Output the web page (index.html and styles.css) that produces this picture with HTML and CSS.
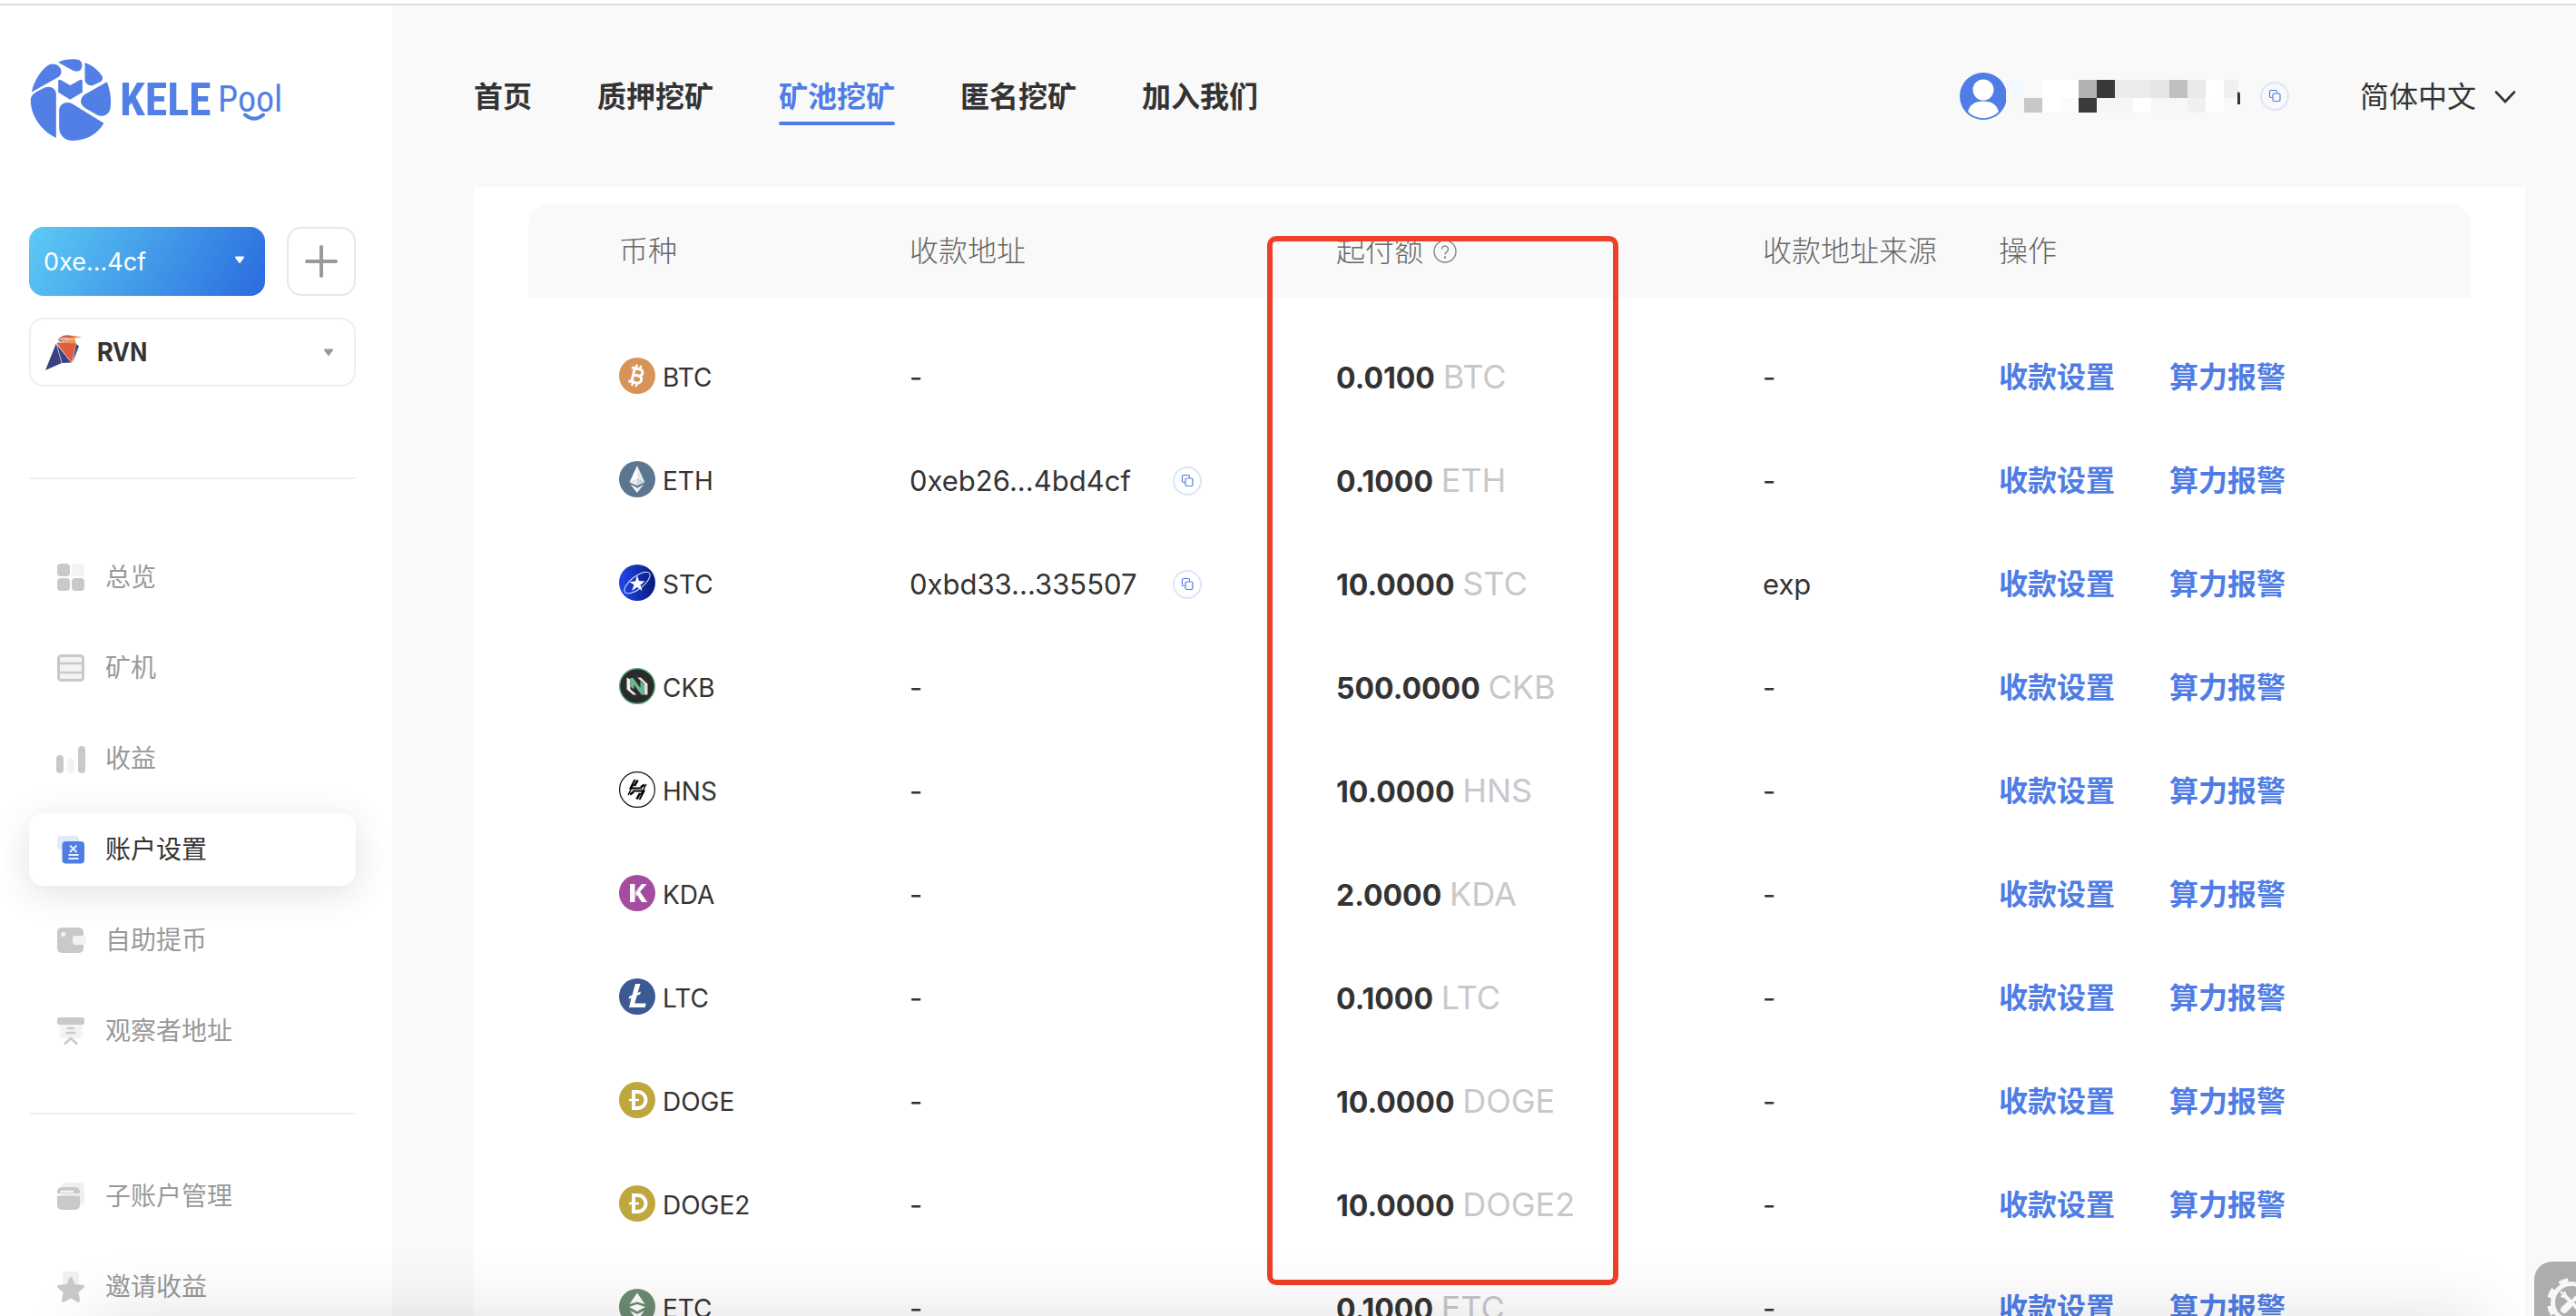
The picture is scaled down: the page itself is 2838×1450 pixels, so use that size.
FILE: index.html
```html
<!DOCTYPE html>
<html lang="zh-CN">
<head>
<meta charset="utf-8">
<title>KELE POOL - 账户设置</title>
<link rel="stylesheet" href="styles.css">
</head>
<body>
<svg class="sprite" aria-hidden="true">
  <defs>
    <linearGradient id="stc-fill" x1="0" x2="1" y1="0" y2="0"><stop offset="0.1" stop-color="#1d43e2"/><stop offset="1" stop-color="#071a7a"/></linearGradient>
    <linearGradient id="kda-fill" x1="0" x2="1" y1="1" y2="0"><stop offset="0" stop-color="#fff" stop-opacity="0.35"/><stop offset="0.5" stop-color="#fff"/></linearGradient>
  </defs>
  <symbol id="copy" viewBox="0 0 32 32">
    <circle cx="16" cy="16" r="15" fill="none" stroke="#dbe4fa" stroke-width="2"/>
    <path d="M13.500 17.500H12a1.500 1.500 0 0 1-1.500-1.500v-5A1.500 1.500 0 0 1 12 9.500h5a1.500 1.500 0 0 1 1.500 1.500v1.500" fill="none" stroke="#4f7de5" stroke-width="1.200"/>
    <rect x="14" y="13" width="8" height="8.500" rx="1.500" fill="none" stroke="#4f7de5" stroke-width="1.200"/>
  </symbol>
  <symbol id="btc" viewBox="0 0 40 40">
    <circle cx="20" cy="20" r="20" fill="#d79358"/>
    <g transform="rotate(13 20 20)" fill="none" stroke="#fff" stroke-width="3">
      <path d="M12 12.500h9.500a3.600 3.600 0 0 1 0 7.200h-6M21.500 19.700a4 4 0 0 1 0 8H12M15.500 12.500v15"/>
      <path d="M17 8v4M21.500 8v4M17 28v4M21.500 28v4" stroke-width="2.400"/>
    </g>
  </symbol>
  <symbol id="eth" viewBox="0 0 40 40">
    <circle cx="20" cy="20" r="20" fill="#5b7790"/>
    <path d="M20 5l-8.500 18.500L20 20z" fill="#fff"/><path d="M20 5l8.500 18.500L20 20z" fill="#e4e9ee"/>
    <path d="M11.500 23.500L20 20v7z" fill="#e9edf1"/><path d="M28.500 23.500L20 20v7z" fill="#cfd7df"/>
    <path d="M12.500 25.500l7.500 4.200V35z" fill="#fff"/><path d="M27.500 25.500L20 29.700V35z" fill="#e4e9ee"/>
  </symbol>
  <symbol id="stc" viewBox="0 0 40 40">
    <circle cx="20" cy="20" r="20" fill="url(#stc-fill)"/>
    <ellipse cx="20" cy="20" rx="17" ry="7" transform="rotate(-38 20 20)" fill="none" stroke="#dfe5ff" stroke-width="1"/>
    <path d="M20 12l2 6 6.500.500-5 4L25.500 29 20 25l-6 4 2.500-6.500-5-3.500 6.500-.500z" fill="#fff"/>
  </symbol>
  <symbol id="ckb" viewBox="0 0 40 40">
    <circle cx="20" cy="20" r="19.300" fill="#2b2b2b" stroke="#5aa57c" stroke-width="1.400"/>
    <path d="M8.500 10.500l4 2v11l7 6h-4l-7-6z" fill="#eee"/>
    <path d="M20 10.500h4l7.500 7V29.500h-4V17z" fill="#e2e2e2"/>
    <path d="M12.500 11h3l8 11v-8l4 4v11.500h-3l-8-11v5l-4-3z" fill="#6bb88d"/>
  </symbol>
  <symbol id="hns" viewBox="0 0 40 40">
    <circle cx="20" cy="20" r="19.400" fill="#fff" stroke="#111" stroke-width="1.200"/>
    <g fill="none" stroke="#000">
      <path d="M17.500 9l-5 9.500H25" stroke-width="2"/><path d="M22.500 31l5-9.500H15" stroke-width="2"/>
      <path d="M20.500 9.500L17 16M28 14.500L24 17.500M12 25.500l4-3M19.500 30.500l3.500-6.500" stroke-width="2.600"/>
      <path d="M30 14l-6.500 12M10 26l6-12" stroke-width="1.400"/>
    </g>
  </symbol>
  <symbol id="kda" viewBox="0 0 40 40">
    <circle cx="20" cy="20" r="20" fill="#a54ba0"/>
    <path d="M12 10h5.500v20H12z" fill="#fff"/><path d="M17.500 19.500L25 10h5.500L17.500 25z" fill="url(#kda-fill)"/><path d="M18.500 20l4-2.500L31 30h-6z" fill="#fff"/>
  </symbol>
  <symbol id="ltc" viewBox="0 0 40 40">
    <circle cx="20" cy="20" r="20" fill="#3b5a93"/>
    <path d="M18 6h5.500l-3 10 3.500-1.500-.800 3-3.500 1.500-2.500 8.500h12.500l-1 4.500H11l2.500-10.500-3 1.200.800-3 3.200-1.300z" fill="#fff"/>
  </symbol>
  <symbol id="doge" viewBox="0 0 40 40">
    <circle cx="20" cy="20" r="20" fill="#bea73f"/>
    <path d="M16 11h4.500a8.900 8.900 0 0 1 0 18H16z" fill="none" stroke="#fff" stroke-width="4"/>
    <path d="M11 20h11" stroke="#fff" stroke-width="2.400"/>
  </symbol>
  <symbol id="etc" viewBox="0 0 40 40">
    <circle cx="20" cy="20" r="20" fill="#6d8b73"/>
    <path d="M20 4.500l8.500 12.500L20 14.500 11.500 17zM11 20l9-3 9 3-9 5zM12 24l8 4 8-4-8 11z" fill="#fff"/>
  </symbol>
</svg>

<div class="shell">
  <aside class="sidebar">
    <a class="logo" href="#" aria-label="KELE POOL">
      <svg class="logo-mark" viewBox="102 195 264 267" fill="#517fe5" aria-hidden="true">
        <path d="M106 303C113 268 138 226 165 213C186 206 203 220 203 238C202 247 197 252 190 256Z"/>
        <path d="M193 206C215 194 250 194 262 199C275 207 272 225 265 231C258 237 247 236 240 232Z"/>
        <path d="M280 207C305 216 327 235 337 252C340 260 336 267 330 270L307 281C295 285 280 276 280 262Z"/>
        <path d="M352 270C362 295 368 330 363 358C357 378 340 385 322 379L283 357C262 345 262 325 280 311Z"/>
        <path d="M342 405C322 440 285 462 240 462C215 462 196 445 196 420V362C197 340 222 330 242 343Z"/>
        <path d="M186 453C135 430 100 375 103 325C105 315 112 308 120 303L150 288C168 281 186 293 186 310Z"/>
        <path d="M193 268Q193 260 201 263L232 281L264 263Q272 260 272 268V304L232 328L193 304Z"/>
      </svg>
      <span class="logo-kele">KELE</span>
      <span class="logo-pool">Pool
        <svg class="logo-smile" viewBox="0 0 24 10" aria-hidden="true"><path d="M2 2.500Q12 11 22 2.500" fill="none" stroke="#517fe5" stroke-width="4" stroke-linecap="round"/></svg>
      </span>
    </a>

    <div class="account-row">
      <div class="picker picker-account">
        <select aria-label="账户"><option>0xe...4cf</option></select>
        <svg class="caret" viewBox="0 0 12 10" aria-hidden="true"><path d="M2 1.500h8L6 7z" fill="currentColor" stroke="currentColor" stroke-width="2" stroke-linejoin="round"/></svg>
      </div>
      <button class="add" type="button" aria-label="添加账户"><svg viewBox="0 0 36 36" aria-hidden="true"><path d="M18 2v32M2 18h32" stroke="#999" stroke-width="4" stroke-linecap="round"/></svg></button>
    </div>
    <div class="picker picker-coin">
      <svg class="rvn" viewBox="0 0 40 40" aria-hidden="true">
        <path d="M12 10l6 22L0 40z" fill="#3a4283"/><path d="M12 11l17 20.500-11 .500z" fill="#3a4283"/>
        <path d="M12 10h22l-5 22z" fill="#df5c42"/><path d="M34 11l3 2.500L30 31z" fill="#3a4283"/>
        <path d="M12 9.500L32 5l2 5.500z" fill="#e99a4b"/><path d="M14 7l16-2.500-14 3.500z" fill="#3a4283"/>
        <path d="M13 7q6-8 17-5l10 1.500-12 1.500q-8-2-15 2" fill="#df5c42"/><path d="M28 3h12l-10 2z" fill="#e99a4b"/>
        <path d="M12 10l6 22M12 10l17 22" stroke="#fff" stroke-width=".6"/>
      </svg>
      <select aria-label="币种"><option>RVN</option></select>
      <svg class="caret" viewBox="0 0 12 10" aria-hidden="true"><path d="M2 1.500h8L6 7z" fill="currentColor" stroke="currentColor" stroke-width="2" stroke-linejoin="round"/></svg>
    </div>

    <nav class="menu" aria-label="账户菜单">
      <ul class="menu-group menu-main">
        <li><a href="#"><svg viewBox="0 0 32 32"><g fill="#c9c9c9"><rect x="1" y="1" width="14" height="14" rx="4"/><rect x="1" y="17" width="14" height="14" rx="4"/><rect x="17" y="17" width="14" height="14" rx="4"/></g><rect x="17" y="1" width="14" height="14" rx="4" fill="#f3f3f3"/></svg>总览</a></li>
        <li><a href="#"><svg viewBox="0 0 32 32"><rect x="2.500" y="2.500" width="27" height="27" rx="3" fill="#f3f3f3" stroke="#c9c9c9" stroke-width="3"/><path d="M2 11h28M2 21h28" stroke="#c9c9c9" stroke-width="2.500"/></svg>矿机</a></li>
        <li><a href="#"><svg viewBox="0 0 32 32"><rect x="0" y="12" width="8" height="20" rx="4" fill="#c9c9c9"/><rect x="12" y="16" width="8" height="16" rx="4" fill="#f3f3f3"/><rect x="24" y="2" width="8" height="30" rx="4" fill="#c9c9c9"/></svg>收益</a></li>
        <li><a class="active" href="#" aria-current="page"><svg viewBox="0 0 32 32"><rect x="1" y="1" width="24" height="15" rx="4" fill="#dfebfc"/><rect x="6.500" y="7" width="24.500" height="24.500" rx="4" fill="#4f7de5"/><path d="M15 11.500l7.500 7.500M22.500 11.500L15 19M13.500 22h11M13.500 26h11" stroke="#e8effd" stroke-width="2"/></svg>账户设置</a></li>
        <li><a href="#"><svg viewBox="0 0 32 32"><rect x="1" y="2" width="29" height="28" rx="5" fill="#c9c9c9"/><circle cx="8" cy="9.500" r="2.500" fill="#f3f3f3"/><rect x="18" y="11" width="15" height="10" rx="3" fill="#f3f3f3"/></svg>自助提币</a></li>
        <li><a href="#"><svg viewBox="0 0 32 32"><path d="M3.500 8h25v12a4 4 0 0 1-4 4h-17a4 4 0 0 1-4-4z" fill="#f3f3f3"/><rect x="1" y="1" width="30" height="8" rx="2" fill="#c9c9c9"/><path d="M13 13h6M11.500 18h9M9.500 30l6.500-6 6.500 6" fill="none" stroke="#c9c9c9" stroke-width="2.400" stroke-linecap="round"/></svg>观察者地址</a></li>
      </ul>
      <ul class="menu-group">
        <li><a href="#"><svg viewBox="0 0 32 32"><rect x="6" y="1" width="25" height="25" rx="5" fill="#f0f0f0"/><path d="M1 13V11a5 5 0 0 1 5-5h15a5 5 0 0 1 5 5v2zM1 15.500h25V26a5 5 0 0 1-5 5H6a5 5 0 0 1-5-5z" fill="#c9c9c9"/><path d="M5.500 11h8.500M16 11h2" stroke="#f6f6f6" stroke-width="2.400" stroke-linecap="round"/></svg>子账户管理</a></li>
        <li><a href="#"><svg viewBox="0 0 32 32"><rect x="7" y="-1" width="18" height="18" rx="2" fill="#f0f0f0"/><path d="M16 5q1.200 0 1.800 1.500L20.500 13l9 1q2.500.800.800 2.800L24.500 22l1.500 9q-.300 2.600-2.800 1.500L16 28.500 8.800 32.500Q6.300 33.600 6 31l1.500-9L1.700 16.800Q0 14.800 2.500 14l9-1 2.700-6.500Q14.800 5 16 5z" fill="#c9c9c9"/></svg>邀请收益</a></li>
      </ul>
    </nav>
  </aside>

  <main class="main">
    <header class="topbar">
      <nav class="topnav" aria-label="主导航">
        <a href="#">首页</a>
        <a href="#">质押挖矿</a>
        <a class="current" href="#" aria-current="page">矿池挖矿</a>
        <a href="#">匿名挖矿</a>
        <a href="#">加入我们</a>
      </nav>
      <div class="user">
        <svg class="avatar" viewBox="0 0 52 52" aria-hidden="true"><circle cx="26" cy="26" r="26" fill="#4f7de5"/><circle cx="26" cy="19" r="11.500" fill="#fff"/><path d="M9 43q3-11.500 17-11.500T43 43q-7 7.300-17 7.300T9 43z" fill="#fff"/></svg>
        <svg class="masked" viewBox="0 0 260 52" aria-hidden="true">
          <clipPath id="mask"><rect x="-1" y="-8" width="257" height="52" rx="20"/></clipPath>
          <g clip-path="url(#mask)">
            <path d="M0 8h20v20H0z" fill="#f2f8fe"/><path d="M40 8h40v20H40z" fill="#fff"/><path d="M80 8h20v20H80z" fill="#b1b1b1"/><path d="M100 8h20v20h-20z" fill="#393939"/><path d="M120 8h60v20h-60z" fill="#ebebeb"/><path d="M160 8h20v20h-20z" fill="#e5e5e5"/><path d="M180 8h20v20h-20z" fill="#c0c0c0"/><path d="M200 8h20v20h-20z" fill="#eaeaea"/><path d="M220 8h20v20h-20z" fill="#fff"/><path d="M240 8h20v20h-20z" fill="#f0f0f0"/>
            <path d="M0 28h20v16H0z" fill="#f7f9f3"/><path d="M20 28h20v16H20z" fill="#c8c8c8"/><path d="M40 28h20v16H40z" fill="#fff"/><path d="M60 28h20v16H60z" fill="#fbfbfb"/><path d="M80 28h20v16H80z" fill="#3b3b3b"/><path d="M100 28h40v16h-40z" fill="#f6f6f6"/><path d="M140 28h20v16h-20z" fill="#fff"/><path d="M160 28h40v16h-40z" fill="#f7f7f7"/><path d="M200 28h20v16h-20z" fill="#f0f0f0"/><path d="M220 28h20v16h-20z" fill="#fefefe"/><path d="M240 28h20v16h-20z" fill="#f9f9f9"/>
          </g>
          <path d="M255 22l2-1 1 3v11h-3z" fill="#333"/>
        </svg>
        <button class="copy" type="button" aria-label="复制"><svg aria-hidden="true"><use href="#copy"/></svg></button>
        <button class="lang" type="button">简体中文<svg viewBox="0 0 24 16" aria-hidden="true"><path d="M2 2.500l10 10.500L22 2.500" fill="none" stroke="#333" stroke-width="2.600" stroke-linecap="round"/></svg></button>
      </div>
    </header>

    <section class="panel">
      <div class="table-wrap">
        <table>
          <colgroup><col class="col-coin"><col class="col-address"><col class="col-amount"><col class="col-source"><col></colgroup>
          <thead>
            <tr><th>币种</th><th>收款地址</th><th>起付额<svg class="help" viewBox="0 0 26 26" aria-hidden="true"><circle cx="13" cy="13" r="12" fill="none" stroke="#888" stroke-width="1.400"/><path d="M9.500 10.500a3.500 3.500 0 1 1 5.500 2.800q-2 1.400-2 3" fill="none" stroke="#888" stroke-width="1.500"/><circle cx="13" cy="19.500" r="1.200" fill="#888"/></svg></th><th>收款地址来源</th><th>操作</th></tr>
          </thead>
          <tbody>
            <tr><td><span class="coin"><svg><use href="#btc"/></svg>BTC</span></td><td>-</td><td><b>0.0100</b> <span class="unit">BTC</span></td><td>-</td><td><a href="#">收款设置</a><a href="#">算力报警</a></td></tr>
            <tr><td><span class="coin"><svg><use href="#eth"/></svg>ETH</span></td><td><span class="address"><span>0xeb26...4bd4cf</span><button class="copy" type="button" aria-label="复制"><svg aria-hidden="true"><use href="#copy"/></svg></button></span></td><td><b>0.1000</b> <span class="unit">ETH</span></td><td>-</td><td><a href="#">收款设置</a><a href="#">算力报警</a></td></tr>
            <tr><td><span class="coin"><svg><use href="#stc"/></svg>STC</span></td><td><span class="address"><span>0xbd33...335507</span><button class="copy" type="button" aria-label="复制"><svg aria-hidden="true"><use href="#copy"/></svg></button></span></td><td><b>10.0000</b> <span class="unit">STC</span></td><td>exp</td><td><a href="#">收款设置</a><a href="#">算力报警</a></td></tr>
            <tr><td><span class="coin"><svg><use href="#ckb"/></svg>CKB</span></td><td>-</td><td><b>500.0000</b> <span class="unit">CKB</span></td><td>-</td><td><a href="#">收款设置</a><a href="#">算力报警</a></td></tr>
            <tr><td><span class="coin"><svg><use href="#hns"/></svg>HNS</span></td><td>-</td><td><b>10.0000</b> <span class="unit">HNS</span></td><td>-</td><td><a href="#">收款设置</a><a href="#">算力报警</a></td></tr>
            <tr><td><span class="coin"><svg><use href="#kda"/></svg>KDA</span></td><td>-</td><td><b>2.0000</b> <span class="unit">KDA</span></td><td>-</td><td><a href="#">收款设置</a><a href="#">算力报警</a></td></tr>
            <tr><td><span class="coin"><svg><use href="#ltc"/></svg>LTC</span></td><td>-</td><td><b>0.1000</b> <span class="unit">LTC</span></td><td>-</td><td><a href="#">收款设置</a><a href="#">算力报警</a></td></tr>
            <tr><td><span class="coin"><svg><use href="#doge"/></svg>DOGE</span></td><td>-</td><td><b>10.0000</b> <span class="unit">DOGE</span></td><td>-</td><td><a href="#">收款设置</a><a href="#">算力报警</a></td></tr>
            <tr><td><span class="coin"><svg><use href="#doge"/></svg>DOGE2</span></td><td>-</td><td><b>10.0000</b> <span class="unit">DOGE2</span></td><td>-</td><td><a href="#">收款设置</a><a href="#">算力报警</a></td></tr>
            <tr><td><span class="coin"><svg><use href="#etc"/></svg>ETC</span></td><td>-</td><td><b>0.1000</b> <span class="unit">ETC</span></td><td>-</td><td><a href="#">收款设置</a><a href="#">算力报警</a></td></tr>
          </tbody>
        </table>
        <div class="highlight"></div>
      </div>
    </section>
  </main>
</div>

<div class="edge-shade"></div>
<button class="tools" type="button" aria-label="工具">
  <svg viewBox="0 0 56 56" aria-hidden="true">
    <circle cx="28" cy="28" r="20.500" fill="none" stroke="#f7f7f7" stroke-width="5"/>
    <circle cx="28" cy="28" r="24" fill="none" stroke="#f7f7f7" stroke-width="6" stroke-dasharray="10 8.850" transform="rotate(11 28 28)"/>
    <path d="M20 20l17 17M36 20L20 36" stroke="#f7f7f7" stroke-width="4" stroke-linecap="round"/>
    <path d="M24.500 31.500L20 36" stroke="#f7f7f7" stroke-width="8" stroke-linecap="round"/>
    <path d="M16 16l4 4M16.500 20.500l2 1.500 3-3-1.500-3" fill="none" stroke="#f7f7f7" stroke-width="2"/>
  </svg>
</button>
</body>
</html>
```
FILE: styles.css
```css
* { box-sizing: border-box; }

:root {
  --blue: #4f7de5;
  --ink: #333;
  --muted: #999;
  --line: #eee;
  --page: #f9f9f9;
}

body {
  margin: 0;
  background: var(--page);
  color: var(--ink);
  font-family: Inter, "Noto Sans CJK SC", sans-serif;
  font-size: 32px;
  line-height: 48px;
}

a { color: inherit; text-decoration: none; }
button, select { font: inherit; color: inherit; border: 0; background: none; padding: 0; cursor: pointer; }
svg { display: block; flex: none; }
ul { list-style: none; margin: 0; padding: 0; }
.sprite { position: absolute; width: 0; height: 0; }

.shell {
  display: flex;
  height: 100vh;
  overflow: hidden;
  padding-top: 2px;
  border-top: 4px solid #fff;
  background: #dcdcdc;
}

/* Sidebar */
.sidebar {
  flex: none;
  width: 432px;
  padding: 58px 40px 0 32px;
  background: #fff;
}
.logo {
  display: flex;
  align-items: center;
  height: 92px;
  color: #517fe5;
  font-family: "Roboto Condensed", "Open Sans Condensed", "Liberation Sans Narrow", "DejaVu Sans Condensed", sans-serif;
}
.logo-mark { width: 92px; height: 90px; }
.logo-kele { width: 100px; margin-left: 8px; font-size: 50px; font-weight: 700; }
.logo-pool { position: relative; margin-left: 8px; font-size: 40px; }
.logo-smile { position: absolute; left: 28px; bottom: 0; width: 24px; height: 10px; }

.account-row { display: flex; gap: 24px; margin: 94px 0 24px; }
.picker { position: relative; display: flex; align-items: center; height: 76px; border-radius: 16px; }
.picker select {
  appearance: none;
  width: 100%;
  height: 100%;
  font-size: 28px;
}
.picker-account {
  flex: 1;
  background: linear-gradient(120deg, #5ccbf5, #439be9 50%, #2a6bdf);
  color: #fff;
}
.picker-account select { padding: 2px 0 0 16px; font-size: 27px; }
.picker-coin { border: 2px solid var(--line); }
.picker-coin select { padding: 0 0 4px 72px; font-family: "Noto Sans CJK SC", sans-serif; font-weight: 700; }
.picker-coin .caret { color: var(--muted); }
.rvn { position: absolute; left: 16px; top: 16px; width: 40px; height: 40px; }
.caret { position: absolute; right: 22px; top: 32px; width: 12px; height: 10px; }
.add {
  display: grid;
  place-items: center;
  width: 76px;
  border: 2px solid #e6e6ec;
  border-radius: 16px;
}
.add svg { width: 36px; height: 36px; }

.menu { margin-top: 100px; }
.menu-group { display: grid; gap: 20px; padding: 50px 0; border-top: 2px solid var(--line); }
.menu-main { padding-top: 68px; }
.menu-group a {
  display: flex;
  align-items: center;
  gap: 22px;
  height: 80px;
  padding-left: 30px;
  border-radius: 16px;
  color: var(--muted);
  font-size: 28px;
}
.menu-group svg { width: 32px; height: 32px; overflow: visible; }
.menu-group .active { background: #fff; color: var(--ink); box-shadow: 0 8px 40px rgba(0, 0, 0, 0.12); }

/* Top bar */
.main { flex: 1; min-width: 0; padding: 0 56px 0 90px; background: var(--page); }
.topbar { display: flex; justify-content: space-between; align-items: center; height: 200px; }
.topnav { display: flex; gap: 72px; padding-top: 2px; font-weight: 700; }
.topnav a { position: relative; white-space: nowrap; }
.topnav .current { color: var(--blue); }
.topnav .current::after {
  content: "";
  position: absolute;
  inset: auto 0 -7px;
  height: 4px;
  border-radius: 2px;
  background: var(--blue);
}
.user { display: flex; align-items: center; padding-right: 10px; }
.avatar { width: 52px; height: 52px; }
.masked { width: 260px; height: 52px; margin: 0 20px 0 -1px; }
.copy, .copy svg { width: 32px; height: 32px; }
.lang { display: flex; align-items: center; gap: 20px; margin-left: 78px; padding-top: 2px; white-space: nowrap; }
.lang svg { width: 24px; height: 16px; }

/* Payout table */
.panel { padding: 18px 60px; background: #fff; }
.table-wrap { position: relative; }
table { width: 100%; table-layout: fixed; border-collapse: separate; border-spacing: 0; }
.col-coin { width: 420px; }
.col-address, .col-amount { width: 470px; }
.col-source { width: 260px; }
th, td { padding: 2px 0 0; text-align: left; white-space: nowrap; }
th { height: 104px; background: var(--page); color: #666; font-weight: 300; }
th:first-child { border-top-left-radius: 24px; }
th:last-child { border-top-right-radius: 24px; }
th:first-child, td:first-child { padding-left: 100px; }
td { height: 114px; font-size: 31px; }
td b, td a { font-size: 32px; font-weight: 700; }
tbody::before { content: ""; display: table-row; height: 30px; }
.help { display: inline-block; width: 26px; height: 26px; margin-left: 11px; vertical-align: -2px; }
.coin { display: flex; align-items: center; gap: 8px; font-size: 28px; }
.coin svg { width: 40px; height: 40px; margin-bottom: 4px; }
.address { display: flex; align-items: center; justify-content: space-between; width: 322px; }
.unit { color: #c8c8cc; font-size: 36px; }
td a { color: var(--blue); }
td a + a { margin-left: 60px; }

/* Marker around the minimum payout column */
.highlight {
  position: absolute;
  left: 814px;
  top: 36px;
  width: 387px;
  height: 1156px;
  border: 6px solid #ee4026;
  border-radius: 10px;
  pointer-events: none;
}

/* Floating layers */
.edge-shade {
  position: fixed;
  left: 100px;
  right: 100px;
  bottom: -100px;
  height: 100px;
  box-shadow: 0 0 80px rgba(0, 0, 0, 0.12);
  pointer-events: none;
}
.tools {
  position: fixed;
  right: -36px;
  bottom: -30px;
  display: grid;
  place-items: center;
  width: 82px;
  height: 90px;
  border-radius: 20px;
  background: #adadad;
}
.tools svg { width: 56px; height: 56px; }
```
